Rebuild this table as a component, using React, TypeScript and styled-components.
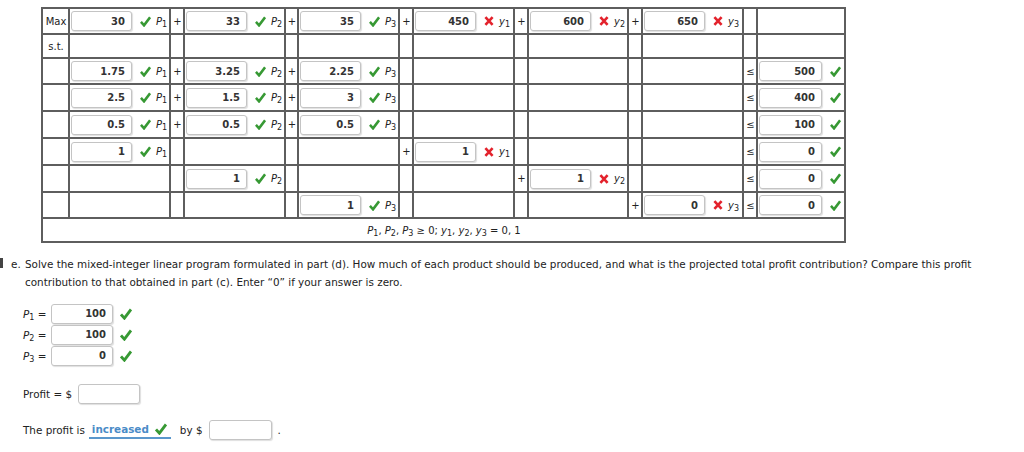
import React from 'react';
import styled, { createGlobalStyle } from 'styled-components';

const Global = createGlobalStyle`
  html, body { margin: 0; padding: 0; background: #fff; }
  body {
    font-family: "DejaVu Sans", Verdana, sans-serif;
    font-size: 10px;
    color: #222;
  }
`;

const Page = styled.div`
  width: 1024px;
  height: 452px;
  overflow: hidden;
  padding-top: 7px;
  box-sizing: border-box;
`;

const Grid = styled.table`
  border-collapse: collapse;
  table-layout: fixed;
  width: 805px;
  margin-left: 41px;
  border: 2px solid #7a7a7a;
`;

const Row = styled.tr<{ $h: number }>`
  height: ${(p) => p.$h}px;
`;

const Cell = styled.td<{ $align?: 'left' | 'center' | 'right' }>`
  border: 2px solid #5e5e5e;
  padding: 0 0 0 1px;
  text-align: ${(p) => p.$align ?? 'left'};
  vertical-align: middle;
  white-space: nowrap;
  overflow: hidden;
  color: #222;
`;

const Term = styled.div`
  display: flex;
  align-items: center;
`;

const NumBox = styled.input<{ $w?: number }>`
  box-sizing: border-box;
  width: ${(p) => p.$w ?? 61}px;
  height: 20px;
  border: 1px solid #c4c4c4;
  border-radius: 3px;
  box-shadow: 1px 1px 1px rgba(0, 0, 0, 0.13);
  background: #fff;
  font-family: "DejaVu Sans", Verdana, sans-serif;
  font-size: 10px;
  font-weight: bold;
  color: #333;
  text-align: right;
  padding: 0 6px 0 4px;
  margin: 0;
  outline: none;
  flex: none;
`;

const MarkBox = styled.span<{ $gapL?: number; $gapR?: number }>`
  display: inline-flex;
  align-items: center;
  margin-left: ${(p) => p.$gapL ?? 8}px;
  margin-right: ${(p) => p.$gapR ?? 5}px;
  flex: none;
`;

const VarName = styled.span`
  font-style: italic;
  color: #222;
`;

const Sub = styled.sub`
  font-style: normal;
  font-size: 8px;
  vertical-align: -2px;
  line-height: 0;
`;

const Check = ({ size = 11 }: { size?: number }) => (
  <svg width={size} height={size} viewBox="0 0 12 12">
    <path d="M1 6.4 L4.4 10.2 L11 1.4" fill="none" stroke="#379934" strokeWidth="2.8" strokeLinejoin="miter" />
  </svg>
);

const Cross = () => (
  <svg width="10" height="10" viewBox="0 0 10 10">
    <path d="M1.4 1.1 L8.6 8.9 M8.6 1.1 L1.4 8.9" stroke="#e3222c" strokeWidth="2.6" />
  </svg>
);

type V = { letter: 'P' | 'y'; n: number };

const Var = ({ letter, n }: V) => (
  <VarName>
    {letter}
    <Sub>{n}</Sub>
  </VarName>
);

const CoefTerm = ({ value, ok, v }: { value: string; ok: boolean; v: V }) => (
  <Term>
    <NumBox readOnly value={value} />
    <MarkBox>{ok ? <Check /> : <Cross />}</MarkBox>
    <Var {...v} />
  </Term>
);

const RhsTerm = ({ value }: { value: string }) => (
  <Term>
    <NumBox readOnly value={value} $w={63} />
    <MarkBox $gapL={8}>
      <Check />
    </MarkBox>
  </Term>
);

const vars: V[] = [
  { letter: 'P', n: 1 },
  { letter: 'P', n: 2 },
  { letter: 'P', n: 3 },
  { letter: 'y', n: 1 },
  { letter: 'y', n: 2 },
  { letter: 'y', n: 3 },
];

const colWidths = [27, 101, 14, 101, 13, 101, 14, 101, 14, 100, 14, 101, 14, 88];

type Coef = { value: string; ok: boolean } | null;

type LineSpec = {
  h: number;
  label?: string;
  coefs: Coef[];
  plus: boolean[];
  le?: boolean;
  rhs?: string;
};

const lines: LineSpec[] = [
  {
    h: 26,
    label: 'Max',
    coefs: [
      { value: '30', ok: true },
      { value: '33', ok: true },
      { value: '35', ok: true },
      { value: '450', ok: false },
      { value: '600', ok: false },
      { value: '650', ok: false },
    ],
    plus: [true, true, true, true, true],
  },
  { h: 24, label: 's.t.', coefs: [null, null, null, null, null, null], plus: [false, false, false, false, false] },
  {
    h: 26,
    coefs: [{ value: '1.75', ok: true }, { value: '3.25', ok: true }, { value: '2.25', ok: true }, null, null, null],
    plus: [true, true, false, false, false],
    le: true,
    rhs: '500',
  },
  {
    h: 27,
    coefs: [{ value: '2.5', ok: true }, { value: '1.5', ok: true }, { value: '3', ok: true }, null, null, null],
    plus: [true, true, false, false, false],
    le: true,
    rhs: '400',
  },
  {
    h: 27,
    coefs: [{ value: '0.5', ok: true }, { value: '0.5', ok: true }, { value: '0.5', ok: true }, null, null, null],
    plus: [true, true, false, false, false],
    le: true,
    rhs: '100',
  },
  {
    h: 27,
    coefs: [{ value: '1', ok: true }, null, null, { value: '1', ok: false }, null, null],
    plus: [false, false, true, false, false],
    le: true,
    rhs: '0',
  },
  {
    h: 27,
    coefs: [null, { value: '1', ok: true }, null, null, { value: '1', ok: false }, null],
    plus: [false, false, false, true, false],
    le: true,
    rhs: '0',
  },
  {
    h: 26,
    coefs: [null, null, { value: '1', ok: true }, null, null, { value: '0', ok: false }],
    plus: [false, false, false, false, true],
    le: true,
    rhs: '0',
  },
];

const Question = styled.div`
  display: flex;
  align-items: flex-start;
  margin-top: 12px;
  line-height: 18px;
  font-size: 10.4px;
`;

const Marker = styled.span`
  flex: none;
  width: 3px;
  height: 10px;
  margin-top: 3px;
  background: #444;
`;

const ItemLabel = styled.span`
  flex: none;
  width: 14px;
  margin-left: 8px;
`;

const ItemBody = styled.p`
  margin: 0;
  width: 985px;
`;

const Answers = styled.div`
  padding-left: 23px;
  margin-top: 12px;
  font-size: 10.4px;
`;

const AnswerRow = styled.div`
  display: flex;
  align-items: center;
  height: 21px;
`;

const AnswerLabel = styled.span`
  width: 28px;
  flex: none;
`;

const Spacer = styled.div<{ $h: number }>`
  height: ${(p) => p.$h}px;
`;

const InlineText = styled.span<{ $ml?: number; $mr?: number }>`
  margin-left: ${(p) => p.$ml ?? 0}px;
  margin-right: ${(p) => p.$mr ?? 0}px;
  flex: none;
`;

const Choice = styled.span`
  display: inline-flex;
  align-items: center;
  margin-left: 4px;
  width: 82px;
  height: 19px;
  border-bottom: 2px solid #5a97cc;
  padding-left: 3px;
  box-sizing: border-box;
  color: #4a8bc7;
  font-weight: bold;
  flex: none;
`;

const App = () => (
  <Page>
    <Global />
    <Grid>
      <colgroup>
        {colWidths.map((w, i) => (
          <col key={i} style={{ width: w }} />
        ))}
      </colgroup>
      <tbody>
        {lines.map((ln, r) => (
          <Row key={r} $h={ln.h}>
            <Cell $align="center">{ln.label ?? ''}</Cell>
            {ln.coefs.map((c, i) => (
              <React.Fragment key={i}>
                {i > 0 && <Cell $align="center">{ln.plus[i - 1] ? '+' : ''}</Cell>}
                <Cell>{c && <CoefTerm value={c.value} ok={c.ok} v={vars[i]} />}</Cell>
              </React.Fragment>
            ))}
            <Cell $align="center">{ln.le ? '≤' : ''}</Cell>
            <Cell>{ln.rhs && <RhsTerm value={ln.rhs} />}</Cell>
          </Row>
        ))}
        <Row $h={24}>
          <Cell colSpan={14} $align="center">
            <Var letter="P" n={1} />, <Var letter="P" n={2} />, <Var letter="P" n={3} /> ≥ 0;{' '}
            <Var letter="y" n={1} />, <Var letter="y" n={2} />, <Var letter="y" n={3} /> = 0, 1
          </Cell>
        </Row>
      </tbody>
    </Grid>

    <Question>
      <Marker />
      <ItemLabel>e.</ItemLabel>
      <ItemBody>
        Solve the mixed-integer linear program formulated in part (d). How much of each product should be
        produced, and what is the projected total profit contribution? Compare this profit contribution to that
        obtained in part (c). Enter “0” if your answer is zero.
      </ItemBody>
    </Question>

    <Answers>
      {[
        { n: 1, v: '100' },
        { n: 2, v: '100' },
        { n: 3, v: '0' },
      ].map((a) => (
        <AnswerRow key={a.n}>
          <AnswerLabel>
            <Var letter="P" n={a.n} /> =
          </AnswerLabel>
          <NumBox readOnly value={a.v} $w={62} />
          <MarkBox $gapL={7}>
            <Check size={12} />
          </MarkBox>
        </AnswerRow>
      ))}
      <Spacer $h={17} />
      <AnswerRow>
        <InlineText $mr={6}>Profit = $</InlineText>
        <NumBox readOnly value="" $w={62} />
      </AnswerRow>
      <Spacer $h={15} />
      <AnswerRow>
        <InlineText>The profit is</InlineText>
        <Choice>
          increased
          <MarkBox $gapL={6}>
            <Check size={12} />
          </MarkBox>
        </Choice>
        <InlineText $ml={9} $mr={6}>by $</InlineText>
        <NumBox readOnly value="" $w={63} />
        <InlineText $ml={6}>.</InlineText>
      </AnswerRow>
    </Answers>
  </Page>
);

export default App;
